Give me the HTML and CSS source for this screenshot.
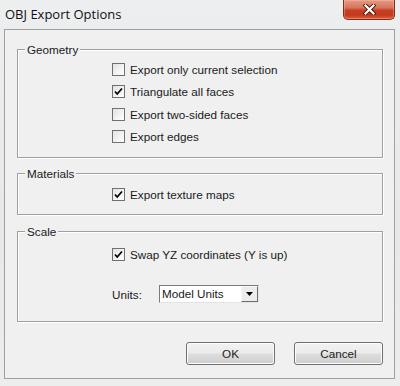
FILE: index.html
```html
<!DOCTYPE html>
<html>
<head>
<meta charset="utf-8">
<link rel="stylesheet" href="styles.css">
</head>
<body>
<div class="window">
  <div class="titlebar">
    <span class="title">OBJ Export Options</span>
    <button class="close" aria-label="Close">
      <svg width="13" height="11" viewBox="0 0 13 11">
        <path d="M2.5 1.5 L10.5 9.5 M10.5 1.5 L2.5 9.5" stroke="#4a1208" stroke-width="4" stroke-linecap="square"/>
        <path d="M2.5 1.5 L10.5 9.5 M10.5 1.5 L2.5 9.5" stroke="#ffffff" stroke-width="2.2" stroke-linecap="square"/>
      </svg>
    </button>
  </div>
  <div class="client">
    <fieldset class="group group-geometry">
      <legend>Geometry</legend>
      <label class="row"><span class="cb"></span>Export only current selection</label>
      <label class="row"><span class="cb"><svg class="tick" width="11" height="11" viewBox="0 0 11 11"><path d="M2 5.5 L4.2 8 L9 2.5" fill="none" stroke="#000" stroke-width="1.7"/></svg></span>Triangulate all faces</label>
      <label class="row"><span class="cb"></span>Export two-sided faces</label>
      <label class="row"><span class="cb"></span>Export edges</label>
    </fieldset>
    <fieldset class="group group-materials">
      <legend>Materials</legend>
      <label class="row"><span class="cb"><svg class="tick" width="11" height="11" viewBox="0 0 11 11"><path d="M2 5.5 L4.2 8 L9 2.5" fill="none" stroke="#000" stroke-width="1.7"/></svg></span>Export texture maps</label>
    </fieldset>
    <fieldset class="group group-scale">
      <legend>Scale</legend>
      <label class="row"><span class="cb"><svg class="tick" width="11" height="11" viewBox="0 0 11 11"><path d="M2 5.5 L4.2 8 L9 2.5" fill="none" stroke="#000" stroke-width="1.7"/></svg></span>Swap YZ coordinates (Y is up)</label>
      <div class="units-row">
        <span class="units-label">Units:</span>
        <div class="select">
          <span class="select-value">Model Units</span>
          <span class="dd"><svg width="7" height="4" viewBox="0 0 7 4"><path d="M0 0 L7 0 L3.5 4 Z" fill="#000"/></svg></span>
        </div>
      </div>
    </fieldset>
    <div class="buttons">
      <button class="btn">OK</button>
      <button class="btn">Cancel</button>
    </div>
  </div>
</div>
</body>
</html>
```
FILE: styles.css
```css
html, body {
  margin: 0;
  padding: 0;
}
body {
  width: 400px;
  height: 386px;
  overflow: hidden;
  font-family: "Liberation Sans", Arial, sans-serif;
  font-size: 11.7px;
  color: #1a1a1a;
}
.window {
  width: 400px;
  height: 386px;
  background: linear-gradient(180deg, #eceeef 0%, #e6e8ea 60%, #eceded 100%);
  display: flex;
  flex-direction: column;
}
.titlebar {
  height: 29px;
  display: flex;
  justify-content: space-between;
  align-items: flex-start;
  flex: none;
}
.title {
  font-family: "Open Sans", "Noto Sans", sans-serif;
  font-size: 13px;
  line-height: 18px;
  margin: 5px 0 0 5px;
  color: #111;
}
.close {
  width: 52px;
  height: 20px;
  margin: 0 5px 0 0;
  padding: 0;
  border: 1px solid #8a2a18;
  border-top: none;
  border-radius: 0 0 5px 5px;
  background: linear-gradient(180deg, #e59a86 0%, #d8745c 40%, #c63f22 55%, #c3391d 80%, #d9623f 100%);
  box-shadow: inset 0 0 0 1px rgba(255, 200, 180, 0.35);
  display: flex;
  align-items: center;
  justify-content: center;
}
.close svg {
  display: block;
}
.client {
  box-sizing: border-box;
  height: 350px;
  margin: 0 5px 0 4px;
  border: 1px solid #a0a0a0;
  background: #f0f0f0;
  padding: 12px 11px 0 12px;
  display: flex;
  flex-direction: column;
}
.group {
  margin: 0;
  padding: 0;
  border: 1px solid #a0a0a0;
  box-shadow: inset 1px 1px 0 #fff, 1px 1px 0 #fff;
  min-width: 0;
}
.group legend {
  margin-left: 7px;
  padding: 0 2px;
  line-height: 15px;
  background: #f0f0f0;
}
.group-geometry {
  padding-top: 1.3px;
  padding-bottom: 9.4px;
}
.group-materials {
  margin-top: 8px;
  padding-top: 2.3px;
  padding-bottom: 8.3px;
}
.group-scale {
  margin-top: 9px;
  padding-top: 4.3px;
  padding-bottom: 18px;
}
.row {
  display: flex;
  align-items: center;
  height: 22.4px;
  gap: 5px;
  padding-left: 94px;
}
.cb {
  box-sizing: border-box;
  width: 13px;
  height: 13px;
  flex: none;
  border: 1px solid #707070;
  background: linear-gradient(135deg, #e2e2e2 0%, #f4f4f4 60%, #ffffff 100%);
  display: flex;
  align-items: center;
  justify-content: center;
}
.tick {
  display: block;
}
.units-row {
  display: flex;
  align-items: center;
  margin-top: 19.3px;
  padding-left: 94px;
}
.units-label {
  width: 47px;
}
.select {
  box-sizing: border-box;
  width: 100px;
  height: 18px;
  display: flex;
  align-items: stretch;
  border: 1px solid;
  border-color: #7a7a7a #e3e3e3 #e3e3e3 #7a7a7a;
  background: #fff;
}
.select-value {
  flex: 1;
  padding-left: 2px;
  line-height: 16px;
}
.dd {
  box-sizing: border-box;
  width: 17px;
  border: 1px solid;
  border-color: #f8f8f8 #6f6f6f #6f6f6f #f8f8f8;
  background: #ececec;
  display: flex;
  align-items: center;
  justify-content: center;
}
.dd svg {
  display: block;
}
.buttons {
  display: flex;
  justify-content: flex-end;
  gap: 19px;
  margin-top: 20px;
}
.btn {
  box-sizing: border-box;
  width: 89px;
  height: 23px;
  padding: 0;
  border: 1px solid #707070;
  border-radius: 3px;
  background: linear-gradient(180deg, #f2f2f2 0%, #ebebeb 48%, #dddddd 52%, #cfcfcf 100%);
  box-shadow: inset 0 0 0 1px #fcfcfc;
  font-family: "Liberation Sans", Arial, sans-serif;
  font-size: 11.7px;
  color: #1a1a1a;
}
```
